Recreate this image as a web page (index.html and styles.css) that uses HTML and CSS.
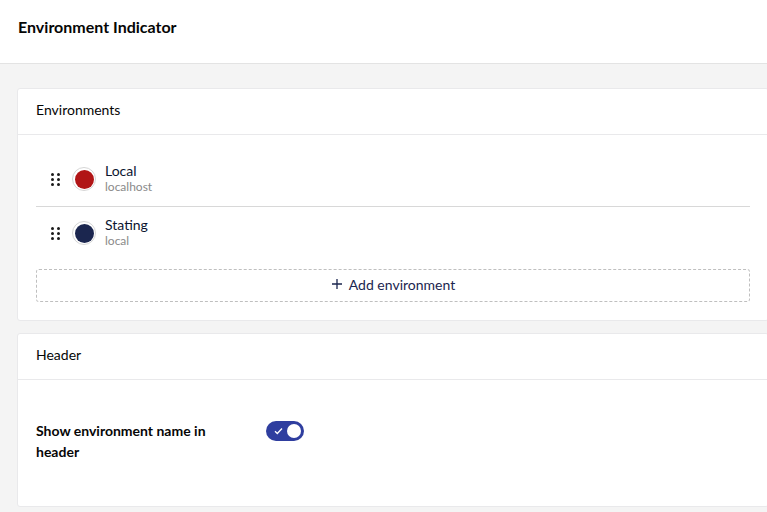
FILE: index.html
```html
<!DOCTYPE html>
<html lang="en">
<head>
  <meta charset="UTF-8">
  <title>Environment Indicator</title>
  <link rel="stylesheet" href="styles.css">
</head>
<body>
<div class="topbar">
  <h1 class="title">Environment Indicator</h1>
</div>
<div class="main">
  <div class="box">
    <div class="box-head">Environments</div>
    <div class="box-body">
      <div class="env">
        <span class="handle"><i></i><i></i><i></i><i></i><i></i><i></i></span>
        <span class="swatch"><span class="fill red"></span></span>
        <div class="env-text">
          <div class="env-name">Local</div>
          <div class="env-host">localhost</div>
        </div>
      </div>
      <div class="env">
        <span class="handle"><i></i><i></i><i></i><i></i><i></i><i></i></span>
        <span class="swatch"><span class="fill navy"></span></span>
        <div class="env-text">
          <div class="env-name">Stating</div>
          <div class="env-host">local</div>
        </div>
      </div>
      <button class="add-btn">
        <svg width="12" height="12" viewBox="0 0 12 12"><path d="M6 1v10M1 6h10" stroke="#1b264f" stroke-width="1.3" fill="none"/></svg>
        Add environment
      </button>
    </div>
  </div>

  <div class="box">
    <div class="box-head">Header</div>
    <div class="box-body prop-body">
      <div class="prop">
        <div class="prop-label">Show environment name in header</div>
        <span class="toggle">
          <svg class="tick" width="9" height="8" viewBox="0 0 9 8"><path d="M1 4.2l2.3 2.3L8 1.5" stroke="#fff" stroke-width="1.3" fill="none"/></svg>
          <span class="knob"></span>
        </span>
      </div>
    </div>
  </div>
</div>
</body>
</html>
```

FILE: styles.css
```css
*{
  margin: 0;
  padding: 0;
  box-sizing: border-box;
}
html, body{
  width: 767px;
  height: 512px;
  overflow: hidden;
}
body{
  background: #f4f4f4;
  font-family: Lato, "Open Sans", sans-serif;
  color: #060606;
}
.topbar{
  height: 64px;
  background: #fff;
  border-bottom: 1px solid #e3e3e3;
  display: flex;
  align-items: center;
  padding: 0 18px 10px;
}
.title{
  font-size: 16px;
  font-weight: 700;
}
.main{
  padding: 24px 0 0 17px;
  width: 786px;
  display: flex;
  flex-direction: column;
  gap: 12px;
}
.box{
  width: 752px;
  background: #fff;
  border: 1px solid #e9e9eb;
  border-radius: 3px;
}
.box-head{
  height: 46px;
  border-bottom: 1px solid #e9e9eb;
  display: flex;
  align-items: center;
  padding: 0 18px 5px;
  font-size: 14px;
}
.box-body{
  padding: 17px 18px 18px;
}
.env{
  height: 54px;
  display: flex;
  align-items: center;
  padding-left: 15px;
}
.env + .env{
  border-top: 1px solid #d8d8d8;
  height: 53px;
}
.handle{
  display: grid;
  grid-template-columns: 3px 3px;
  grid-auto-rows: 3px;
  column-gap: 3px;
  row-gap: 2px;
  margin-right: 12px;
  margin-top: 1px;
}
.handle i{
  display: block;
  width: 3px;
  height: 3px;
  border-radius: 50%;
  background: #1b1b1b;
}
.swatch{
  width: 24px;
  height: 24px;
  border-radius: 50%;
  border: 1px solid #d6d6d6;
  display: flex;
  align-items: center;
  justify-content: center;
  margin-right: 9px;
}
.fill{
  width: 19px;
  height: 19px;
  border-radius: 50%;
}
.red{
  background: #b11516;
}
.navy{
  background: #1b264f;
}
.env-text{
  margin-top: 0;
}
.env-name{
  font-size: 14px;
  line-height: 16px;
  color: #0b1530;
}
.env-host{
  font-size: 12px;
  line-height: 16px;
  color: #8a8a8a;
}
.add-btn{
  margin-top: 10px;
  width: 100%;
  height: 33px;
  border: 1px dashed #bfbfbf;
  border-radius: 3px;
  background: #fff;
  font-family: inherit;
  font-size: 14px;
  color: #1b264f;
  display: flex;
  align-items: center;
  justify-content: center;
  gap: 6px;
  padding-bottom: 3px;
}
.prop-body{
  padding: 40px 18px 44px;
}
.prop{
  display: flex;
  align-items: flex-start;
}
.prop-label{
  width: 200px;
  font-size: 14px;
  font-weight: 700;
  line-height: 21px;
  margin-right: 30px;
}
.toggle{
  margin-top: 1px;
  width: 38px;
  height: 20px;
  border-radius: 10px;
  background: #2f3e9f;
  display: flex;
  align-items: center;
  justify-content: space-between;
  padding: 0 3px 0 8px;
}
.knob{
  width: 14px;
  height: 14px;
  border-radius: 50%;
  background: #fff;
}
```
